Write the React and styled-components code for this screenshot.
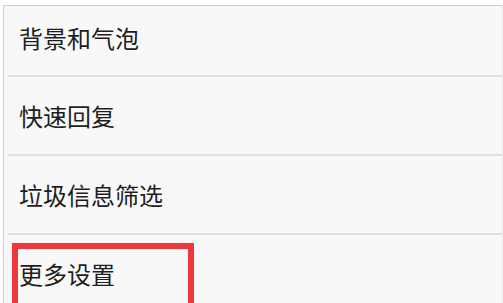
import React from 'react';
import styled, { createGlobalStyle } from 'styled-components';

const GlobalStyle = createGlobalStyle`
    html, body {
        margin: 0;
        padding: 0;
        background: #fff;
        overflow: hidden;
    }
`;

const Page = styled.div`
    width: 503px;
    height: 303px;
    padding: 5px 0 0 3px;
    box-sizing: border-box;
    position: relative;
    overflow: hidden;
`;

const Panel = styled.div`
    border: 1px solid #cfcfcf;
    border-bottom: none;
    border-right-color: #ececec;
    background: #f8f8f8;
    height: 320px;
    padding-left: 4px;
    box-sizing: border-box;
`;

const Row = styled.div`
    height: ${(p) => (p.$first ? 71 : 79)}px;
    border-bottom: 2px solid #e0e0e0;
    padding-top: ${(p) => (p.$first ? 16 : 23)}px;
    padding-left: 11px;
    box-sizing: border-box;
    font-family: "Noto Sans CJK SC", "Noto Sans", sans-serif;
    font-size: 24px;
    line-height: 32px;
    color: #1e1e1e;
`;

const Highlight = styled.div`
    position: absolute;
    left: 12px;
    top: 243px;
    width: 182px;
    height: 90px;
    border: 6px solid #ee3a3d;
    box-sizing: border-box;
    pointer-events: none;
`;

const items = ['背景和气泡', '快速回复', '垃圾信息筛选', '更多设置'];

const App = () => (
    <>
        <GlobalStyle />
        <Page>
            <Panel>
                {items.map((label, i) => (
                    <Row key={label} $first={i === 0}>{label}</Row>
                ))}
            </Panel>
            <Highlight />
        </Page>
    </>
);

export default App;
